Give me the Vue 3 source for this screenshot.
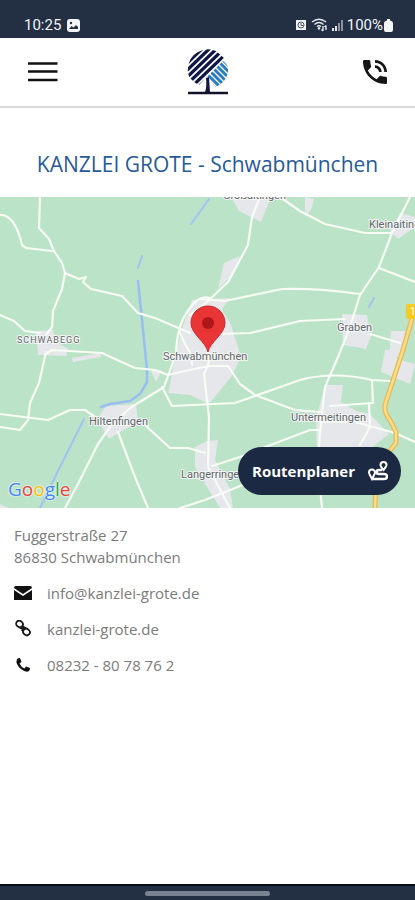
<template>
  <div class="screen">
    <div class="status-bar">
      <div class="status-group">
        <span>10:25</span>
        <svg width="13" height="13" viewBox="0 0 13 13">
          <rect width="13" height="13" rx="3" fill="#f2f4f6" />
          <circle cx="4" cy="4" r="1.2" fill="#233044" />
          <path d="M2 10 L4.500 7 L6.500 8.500 L9 6 L11 8 V10 Z" fill="#233044" />
        </svg>
      </div>
      <div class="status-group status-right">
        <svg width="12" height="12" viewBox="0 0 12 12">
          <rect x="1" y="1" width="10" height="10" fill="#f2f4f6" />
          <circle cx="6" cy="6" r="3" fill="none" stroke="#4c5868" />
          <path d="M6 4 V6.500 H8" fill="none" stroke="#4c5868" />
        </svg>
        <svg width="17" height="14" viewBox="0 0 17 14" fill="none" stroke="#e4e7eb" stroke-width="1.400">
          <path d="M1 4 Q8 -1.500 15 4 M3.500 6.500 Q8 2.500 12.500 6.500 M6 8.500 Q8 7 10 8.500" />
          <path d="M7 9.500 L8 11 L9 9.500 M12 8 V13 M10.500 11.500 L12 13 M15 12 V7.500 M13.500 9 L15 7.500" />
        </svg>
        <svg class="signal" width="11" height="11" viewBox="0 0 11 11">
          <path d="M0 8 H2 V11 H0 Z M3 6 H5 V11 H3 Z" fill="#e4e7eb" />
          <path d="M6 3 H8 V11 H6 Z M9 0 H11 V11 H9 Z" fill="#8a94a0" />
        </svg>
        <span>100%</span>
        <svg class="battery" width="9" height="13" viewBox="0 0 9 13">
          <path d="M3 0 H6 V1.500 Q9 2 9 4.500 V11 Q9 13 7 13 H2 Q0 13 0 11 V4.500 Q0 2 3 1.500 Z" fill="#f2f4f6" />
        </svg>
      </div>
    </div>

    <header class="app-bar">
      <button class="icon-btn" aria-label="Menü">
        <svg width="30" height="20" viewBox="0 0 30 20" stroke="#111" stroke-width="2.400">
          <path d="M0 1.500 H29.500 M0 9.500 H29.500 M0 18 H29.500" />
        </svg>
      </button>
      <svg class="logo" width="42" height="48" viewBox="0 0 42 48">
        <defs>
          <clipPath id="crownDark">
            <path d="M5 32 Q0 28 1 20 Q2 9 11 4 Q20 -1 29 3 L37 10 L12 37 Q8 35 5 32 Z" />
          </clipPath>
          <clipPath id="crownBlue">
            <path d="M36 13 Q42 17 41 24 Q39 34 29 39 L20 29 Z" />
          </clipPath>
        </defs>
        <g clip-path="url(#crownDark)" stroke="#101744" stroke-width="3.300">
          <path
            v-for="n in 7"
            :key="n"
            :d="`M-5 ${n * 7 + 6} L45 ${n * 7 - 42}`"
          />
        </g>
        <g clip-path="url(#crownBlue)" stroke="#287bc1" stroke-width="3">
          <path
            v-for="n in 11"
            :key="n"
            :d="`M0 ${n * 6 - 36} L50 ${n * 6 + 14}`"
          />
        </g>
        <path d="M19 30 L22 29 L23 44 H18 Q20 39 19 30 Z" fill="#101744" />
        <path d="M1 45 H41" stroke="#10142b" stroke-width="2.400" />
      </svg>
      <a class="icon-btn" href="tel:082328078762" aria-label="Anrufen">
        <svg width="32" height="32" viewBox="0 0 24 24" fill="#151515">
          <path d="M20 15.500c-1.250 0-2.450-.2-3.570-.57-.35-.11-.74-.03-1.020.24l-2.200 2.200c-2.830-1.440-5.150-3.750-6.590-6.580l2.200-2.210c.28-.27.36-.66.25-1.010C8.700 6.450 8.500 5.250 8.500 4c0-.55-.45-1-1-1H4c-.55 0-1 .45-1 1 0 9.390 7.610 17 17 17 .55 0 1-.45 1-1v-3.500c0-.55-.45-1-1-1z" />
          <path d="M19 12h2c0-4.970-4.030-9-9-9v2c3.870 0 7 3.130 7 7zM15 12h2c0-2.760-2.240-5-5-5v2c1.660 0 3 1.340 3 3z" />
        </svg>
      </a>
    </header>

    <main>
      <h1>KANZLEI GROTE - Schwabmünchen</h1>

      <div class="map">
        <svg class="map-canvas" viewBox="0 0 415 311" preserveAspectRatio="xMidYMid slice">
          <rect width="415" height="311" fill="#bbe3c7" />
          <path v-for="(d, i) in towns" :key="'t' + i" :d="d" fill="#e5e7eb" />
          <g fill="none" stroke-linecap="round" stroke-linejoin="round">
            <path v-for="(d, i) in rivers" :key="'w' + i" :d="d" stroke="#a3c2f3" stroke-width="2" />
            <path d="M138 84 L145 153 147 173 147 185 140 197 130 204 110 207 101 210" stroke="#9abdf3" stroke-width="2.500" />
            <path v-for="(d, i) in roads" :key="'r' + i" :d="d" stroke="#f7fcf5" stroke-width="2.200" />
            <path :d="highway" stroke="#e5b955" stroke-width="5" />
            <path :d="highway" stroke="#fbdc89" stroke-width="2.500" />
          </g>
          <rect x="406" y="107" width="20" height="15" rx="2" fill="#f5cb22" />
          <text x="410" y="118" class="shield">17</text>
          <text
            v-for="label in labels"
            :key="label.name"
            :x="label.x"
            :y="label.y"
            :class="['place', { district: label.district }]"
          >{{ label.name }}</text>
          <path d="M208 155 C206 145 191 137 191 126 A17 17 0 0 1 225 126 C225 137 210 145 208 155 Z" fill="#e93535" stroke="#c92b2a" />
          <circle cx="208" cy="126" r="6" fill="#ae1717" />
        </svg>
        <div class="google">
          <span class="blue">G</span><span class="red">o</span><span class="yellow">o</span><span class="blue">g</span><span class="green">l</span><span class="red">e</span>
        </div>
        <button class="route-btn">
          Routenplaner
          <svg width="20" height="20" viewBox="0 0 20 20" fill="none" stroke="#fff" stroke-width="2">
            <path d="M4 18 C2 14 1 13 1 11.500 A3 3 0 0 1 7 11.500 C7 13 6 14 4 18 Z" />
            <path d="M15.500 9 C13 6 12.500 5 12.500 4 A3 3 0 0 1 18.500 4 C18.500 5 18 6 15.500 9 Z" />
            <path d="M14 9 H11 Q8.500 9 8.500 11 T11 13 H16 Q19 13 19 15.500 T16 18 H5" stroke-width="2.400" />
          </svg>
        </button>
      </div>

      <section class="contact">
        <address>
          Fuggerstraße 27<br />
          86830 Schwabmünchen
        </address>
        <ul>
          <li>
            <svg width="18" height="18" viewBox="0 0 18 18">
              <path d="M2 2 H16 Q18 2 18 4 L9 10 L0 4 Q0 2 2 2 Z M0 6 L9 12 L18 6 V16 H0 Z" fill="#111" />
            </svg>
            <a href="mailto:info@kanzlei-grote.de">info@kanzlei-grote.de</a>
          </li>
          <li>
            <svg width="18" height="18" viewBox="0 0 18 18" fill="none" stroke="#181818" stroke-width="1.800">
              <rect x="2" y="1" width="7" height="6" rx="3" transform="rotate(45 5.500 4)" />
              <rect x="9" y="9" width="7" height="6" rx="3" transform="rotate(45 12.500 12)" />
              <path d="M6 8 Q9 9 10 6 M8 11 Q9 7 12 8" />
            </svg>
            <a href="https://kanzlei-grote.de">kanzlei-grote.de</a>
          </li>
          <li>
            <svg width="18" height="18" viewBox="0 0 18 18">
              <path d="M3 3 Q4 2 6 2 L7.500 6 L5.500 7.500 Q7 11 10.500 12.500 L12 10.500 L16 12 Q16 14 15 15 Q12 17 7 13 Q1 8 3 3 Z" fill="#111" />
            </svg>
            <a href="tel:082328078762">08232 - 80 78 76 2</a>
          </li>
        </ul>
      </section>
    </main>

    <div class="nav-bar">
      <span class="nav-handle"></span>
    </div>
  </div>
</template>

<script setup>
const labels = [
  { name: 'Großaitingen', x: 223, y: 2 },
  { name: 'Kleinaitingen', x: 369, y: 31 },
  { name: 'SCHWABEGG', x: 17, y: 146, district: true },
  { name: 'Graben', x: 337, y: 134 },
  { name: 'Schwabmünchen', x: 163, y: 163 },
  { name: 'Hiltenfingen', x: 89, y: 228 },
  { name: 'Untermeitingen', x: 291, y: 224 },
  { name: 'Langerringen', x: 181, y: 281 }
]

// Bebaute Flächen
const towns = [
  'M231 0 L239 14 261 25 271 0 Z',
  'M305 0 L314 2 311 13 305 20 Z',
  'M400 16 L415 20 V30 L398 42 390 34 Z',
  'M224 66 L240 59 232 78 218 92 Z',
  'M36 134 L53 133 55 144 68 152 66 159 38 158 Z',
  'M72 161 L100 156 101 160 73 165 Z',
  'M192 103 L230 101 222 112 231 128 241 160 231 180 209 207 190 198 168 196 176 157 182 132 Z',
  'M151 174 L162 173 156 185 Z',
  'M106 209 L136 207 138 225 120 235 109 242 97 222 Z',
  'M342 117 L367 118 371 139 366 152 343 148 Z',
  'M391 134 L405 134 402 160 389 160 Z',
  'M385 153 L394 153 397 162 415 167 410 187 381 175 Z',
  'M325 188 L343 188 341 205 356 214 370 217 389 237 370 252 317 257 316 222 Z',
  'M195 250 L207 244 218 243 215 263 230 292 233 311 220 311 207 290 195 270 Z',
  'M0 307 L8 311 H0 Z'
]

const roads = [
  'M40 0 L39 31 49 42 54 54 62 66 65 76',
  'M0 18 Q6 17 12 24 T22 48 L26 51 52 54',
  'M65 76 L79 82 86 80 83 85 91 92 122 99 138 116 155 121 190 136',
  'M65 76 L62 92 53 114 52 130 46 138',
  'M0 118 L14 124 25 134 40 136',
  'M176 157 Q177 126 190 111 Q199 98 210 101',
  'M179 133 Q185 148 191 157 L192 168',
  'M46 157 L52 153 102 156 135 171 155 173 168 178 185 174 209 169',
  'M46 155 L39 186 30 206 28 223 20 233 0 230',
  'M0 217 L48 223 70 213 85 213 98 222',
  'M176 157 L164 190 130 211 110 230 98 247 78 287 65 311',
  'M118 235 L135 280 148 311',
  'M145 228 L170 251 188 251 205 256',
  'M162 190 L172 209 235 206 300 183 Q333 174 372 183 L390 184',
  'M208 155 L209 165 204 177 209 220 208 270 230 311',
  'M209 169 H228 L240 187 255 198 295 213 320 215',
  'M260 0 L252 20 248 48 228 85 207 105 190 118',
  'M280 0 L300 14 325 27 365 36 392 36',
  'M410 0 L392 36 379 70 360 98 350 130 338 160 325 190 320 235 318 270 322 311',
  'M379 71 L415 85',
  'M200 102 L225 104 282 92 Q320 91 360 97',
  'M218 137 L250 136 300 124 345 122',
  'M370 137 L400 146',
  'M372 183 L373 206 330 209',
  'M369 206 L370 230 360 248',
  'M320 225 L355 225 395 236 415 245',
  'M260 252 L310 233 H320',
  'M212 269 L240 260 260 252',
  'M180 311 L205 303 245 287'
]

const rivers = [
  'M209 2 L191 27',
  'M142 59 L138 71',
  'M84 222 L60 270 40 311',
  'M374 101 L369 110'
]

const highway = 'M412 122 L403 153 385 208 Q384 216 390 223 L396 235 396 246 385 260 376 290 375 311'
</script>

<style>
body {
  margin: 0;
}
</style>

<style scoped>
.screen {
  display: flex;
  flex-direction: column;
  min-height: 100vh;
  background: #fff;
  font-family: "Open Sans", "Noto Sans", sans-serif;
}

.status-bar {
  display: flex;
  justify-content: space-between;
  align-items: flex-end;
  box-sizing: border-box;
  height: 38px;
  padding: 0 22px 4px 24px;
  background: #233044;
  color: #f2f4f6;
  font-family: Roboto, sans-serif;
  font-size: 15px;
  line-height: 18px;
}

.status-group {
  display: flex;
  align-items: center;
  gap: 6px;
}

.status-right {
  gap: 4px;
}

.battery {
  margin-left: -3px;
}

.app-bar {
  display: grid;
  grid-template-columns: 1fr auto 1fr;
  align-items: center;
  height: 68px;
  padding: 0 24px;
  border-bottom: 2px solid #d9d9d9;
}

.icon-btn {
  display: flex;
  padding: 4px;
  border: none;
  background: none;
  cursor: pointer;
  justify-self: start;
}

.icon-btn:last-child {
  padding: 0;
  justify-self: end;
}

main {
  flex: 1;
}

h1 {
  margin: 0;
  padding: 40px 16px 17px;
  color: #285a98;
  font-size: 21px;
  font-weight: 400;
  line-height: 32px;
  text-align: center;
}

.map {
  position: relative;
  height: 311px;
  overflow: hidden;
}

.map-canvas {
  display: block;
  width: 100%;
  height: 100%;
}

.place {
  fill: #626669;
  stroke: #f4f6f6;
  stroke-width: 2px;
  paint-order: stroke;
  font-family: Roboto, sans-serif;
  font-size: 11px;
}

.district {
  font-size: 9px;
  letter-spacing: 1px;
}

.shield {
  fill: #fff;
  font-family: Roboto, sans-serif;
  font-size: 10px;
}

.google {
  position: absolute;
  left: 8px;
  bottom: 6px;
  font-family: "Open Sans", sans-serif;
  font-size: 19px;
  font-weight: 500;
  line-height: 26px;
  text-shadow: 0 0 2px #fff, 0 0 2px #fff;
}

.blue {
  color: #4285f4;
}

.red {
  color: #ea4335;
}

.yellow {
  color: #fbbc05;
}

.green {
  color: #34a853;
}

.route-btn {
  position: absolute;
  right: 14px;
  bottom: 13px;
  display: flex;
  align-items: center;
  gap: 13px;
  height: 48px;
  padding: 0 13px 0 14px;
  border: none;
  border-radius: 24px;
  background: #1c2942;
  color: #fff;
  font-family: inherit;
  font-size: 15px;
  font-weight: 700;
  cursor: pointer;
}

.contact {
  padding: 16px 14px;
  color: #7b7b7b;
  font-size: 15px;
  line-height: 22px;
}

address {
  font-style: normal;
}

ul {
  display: flex;
  flex-direction: column;
  gap: 14px;
  margin: 14px 0 0;
  padding: 0;
  list-style: none;
}

li {
  display: flex;
  align-items: center;
  gap: 15px;
}

li a {
  color: inherit;
  text-decoration: none;
}

.nav-bar {
  display: flex;
  justify-content: center;
  align-items: center;
  box-sizing: border-box;
  height: 16px;
  border-top: 2px solid #040d18;
  background: #233044;
}

.nav-handle {
  width: 30%;
  height: 5px;
  border-radius: 3px;
  background: #788291;
}
</style>
